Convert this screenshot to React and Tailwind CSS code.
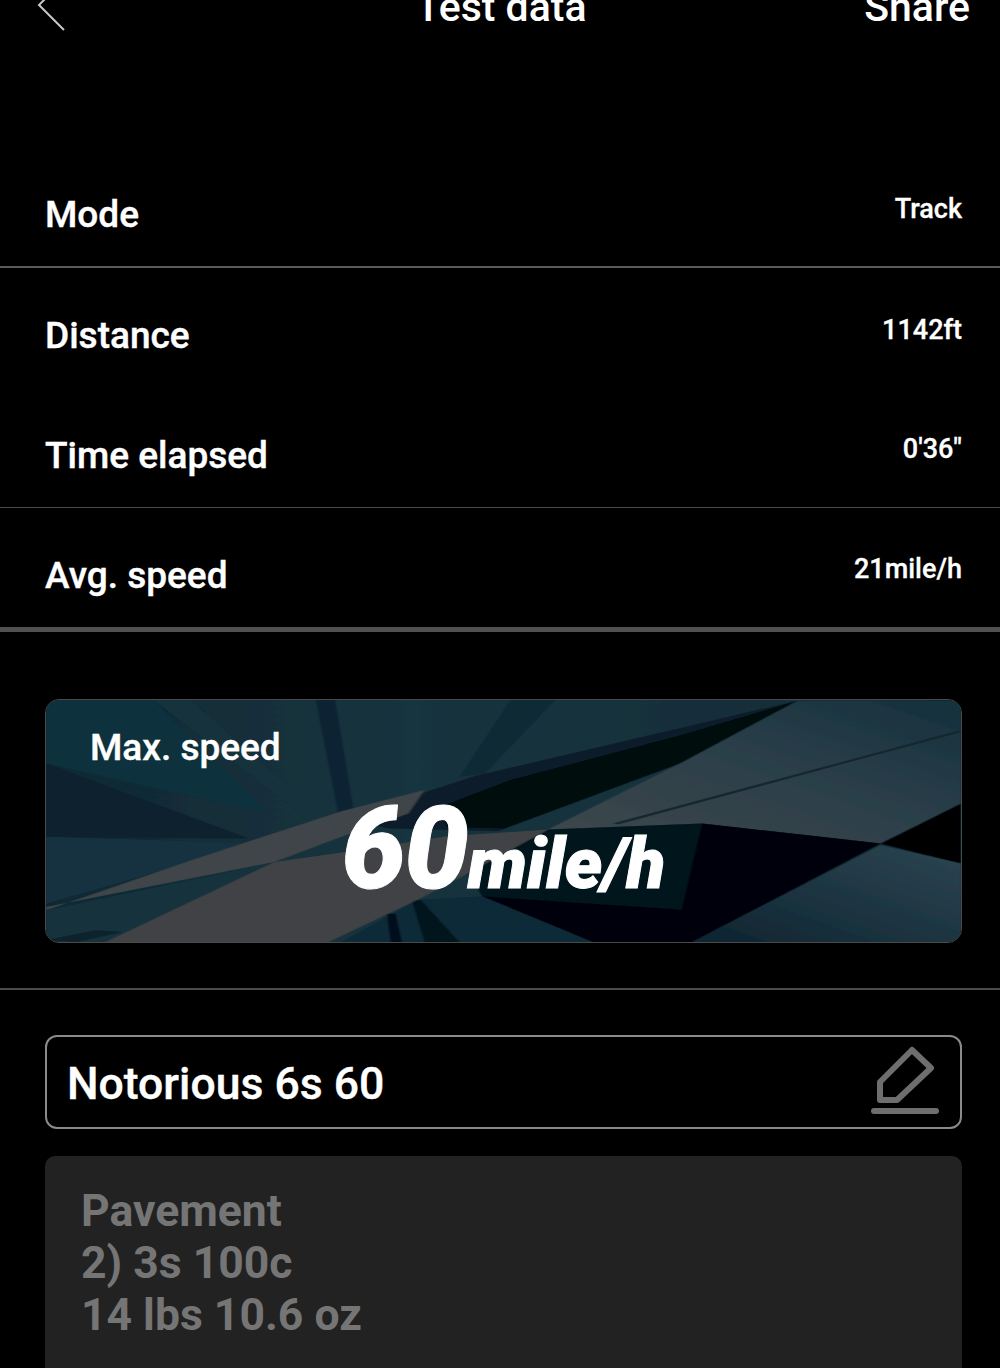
import React from "react";

const stats = [
  { label: "Mode", value: "Track", border: "border-b-2 border-[#5a5a5a]", h: "h-[120px]" },
  { label: "Distance", value: "1142ft", border: "", h: "h-[120px]" },
  { label: "Time elapsed", value: "0'36\"", border: "border-b border-[#4a4a4a]", h: "h-[120px]" },
  { label: "Avg. speed", value: "21mile/h", border: "border-b-[5px] border-[#505050]", h: "h-[124px]" },
];

// traced from the card artwork, coordinates are arbitrary art units
function CardArt() {
  return (
    <svg className="absolute inset-0 h-full w-full" viewBox="72 60 1434 725" preserveAspectRatio="none">
      <defs>
        <linearGradient id="base" x1="0" y1="0" x2="1" y2="0">
          <stop offset="0" stopColor="#0f2833" />
          <stop offset="0.4" stopColor="#17343f" />
          <stop offset="1" stopColor="#102a36" />
        </linearGradient>
        <linearGradient id="right" x1="0" y1="1" x2="1" y2="0">
          <stop offset="0" stopColor="#3e474c" />
          <stop offset="0.55" stopColor="#2b3f49" />
          <stop offset="1" stopColor="#14303c" />
        </linearGradient>
        <linearGradient id="lowerRight" x1="0" y1="1" x2="1" y2="0">
          <stop offset="0" stopColor="#0d2430" />
          <stop offset="1" stopColor="#2d4652" />
        </linearGradient>
        <filter id="soft">
          <feGaussianBlur stdDeviation="2" />
        </filter>
      </defs>
      <g filter="url(#soft)">
        <rect x="60" y="50" width="1460" height="750" fill="url(#base)" />
        {/* rays */}
        <polygon points="495,60 525,60 555,400 530,400" fill="#0c2430" />
        <polygon points="800,60 870,60 760,280 720,290" fill="#0e2a36" />
        <polygon points="240,60 300,60 500,400 470,400" fill="#12303c" />
        <polygon points="72,250 390,475 72,470" fill="#0b222d" />
        <polygon points="72,470 400,490 72,670" fill="#17333f" />
        <polygon points="72,60 240,60 420,400 72,250" fill="#11303d" />
        {/* top wedge */}
        <polygon points="1250,62 1068,143 744,288 535,418 610,445 781,453 1068,248" fill="#0a1f29" />
        <polygon points="1250,62 1068,165 800,300 690,380 700,440 790,445 1068,248" fill="#02070a" />
        {/* right band */}
        <polygon points="1250,62 1506,62 1506,370 1380,490 1100,430 859,448 1068,248" fill="url(#right)" />
        <polygon points="960,430 1506,150 1506,156 970,432" fill="#14252e" />
        {/* lower dark */}
        <polygon points="734,578 859,448 1100,430 1380,490 1085,785 932,788 755,648" fill="#06171f" />
        <polygon points="1100,430 1380,490 1085,785 932,788 755,648 1068,688" fill="#010507" />
        <polygon points="1380,490 1506,370 1506,550" fill="#020406" />
        <polygon points="1380,495 1506,550 1506,785 1085,785" fill="url(#lowerRight)" />
        {/* teal bottom */}
        <polygon points="535,785 655,658 755,648 932,788" fill="#0f2a37" />
        <polygon points="612,785 630,785 620,700 606,700" fill="#04101a" />
        <polygon points="665,785 720,785 660,660 645,660" fill="#06151d" />
        {/* left grey sweep */}
        <polygon points="72,785 72,690 430,545 165,785" fill="#12303d" />
        <polygon points="72,690 300,540 535,393 665,330 640,400 535,470 430,545 72,680" fill="#3f4548" />
        <polygon points="165,785 430,545 560,510 700,468 859,448 734,578 655,658 515,785" fill="#404344" />
        <polygon points="72,780 150,750 190,755 120,785" fill="#0c222c" />
      </g>
    </svg>
  );
}

function EditIcon() {
  return (
    <svg width="68" height="72" viewBox="0 0 68 72" fill="none" stroke="#6e6e6e" strokeLinejoin="round" strokeLinecap="round">
      <path d="M9 54 V36 L41 4 L60 22 L26 54 Z" strokeWidth="6" />
      <path d="M3 65 H65" strokeWidth="6" />
    </svg>
  );
}

export default function App() {
  return (
    <div className="h-[1368px] overflow-hidden bg-black text-white font-['Roboto',sans-serif]">
      {/* Header */}
      <div className="-mt-[24px] flex h-[64px] items-center justify-between pl-[36px] pr-[30px]">
        <svg width="30" height="44" viewBox="0 0 30 44" fill="none" stroke="#c8c8c8" strokeWidth="2" className="mt-[2px]">
          <path d="M28 43 L3 18 L28 -7" />
        </svg>
        <div className="pl-[72px] text-[41px] font-medium">Test data</div>
        <div className="text-[41px] font-medium">Share</div>
      </div>

      <div className="mt-[108px]">
        {stats.map((s) => (
          <div key={s.label} className={`flex items-center justify-between pl-[45px] pr-[38px] ${s.h} ${s.border}`}>
            <span className="pt-[16px] text-[37px] font-medium [-webkit-text-stroke:0.4px_white]">{s.label}</span>
            <span className="pt-[4px] text-[27px] font-medium [-webkit-text-stroke:0.3px_white]">{s.value}</span>
          </div>
        ))}
      </div>

      <div className="border-b-2 border-[#4a4a4a] px-[45px] pt-[67px] pb-[45px]">
        <div className="relative h-[244px] w-[917px] overflow-hidden rounded-[14px] border border-[#4a4a4a]">
          <CardArt />
          <div className="relative pl-[44px] pt-[26px] text-[37px] font-medium leading-[44px] [-webkit-text-stroke:0.4px_white]">Max. speed</div>
          <div className="relative mt-[22px] flex items-baseline justify-center font-['Roboto',sans-serif] font-black italic leading-none [-webkit-text-stroke:1px_white]">
            <span className="text-[114px] tracking-[-1px]">60</span>
            <span className="text-[71px]">mile/h</span>
          </div>
        </div>
      </div>

      <div className="px-[45px] pt-[45px]">
        <div className="flex h-[94px] w-[917px] items-center justify-between rounded-[12px] border-2 border-[#8a8a8a] pl-[20px] pr-[21px]">
          <span className="pt-[4px] text-[44.5px] font-medium [-webkit-text-stroke:0.4px_white]">Notorious 6s 60</span>
          <EditIcon />
        </div>
        <div className="mt-[27px] h-[260px] w-[917px] rounded-[10px] bg-[#222222] pl-[36px] pt-[29px] text-[44.5px] font-bold leading-[52px] text-[#757575]">
          <div>Pavement</div>
          <div>2) 3s 100c</div>
          <div>14 lbs 10.6 oz</div>
        </div>
      </div>
    </div>
  );
}
